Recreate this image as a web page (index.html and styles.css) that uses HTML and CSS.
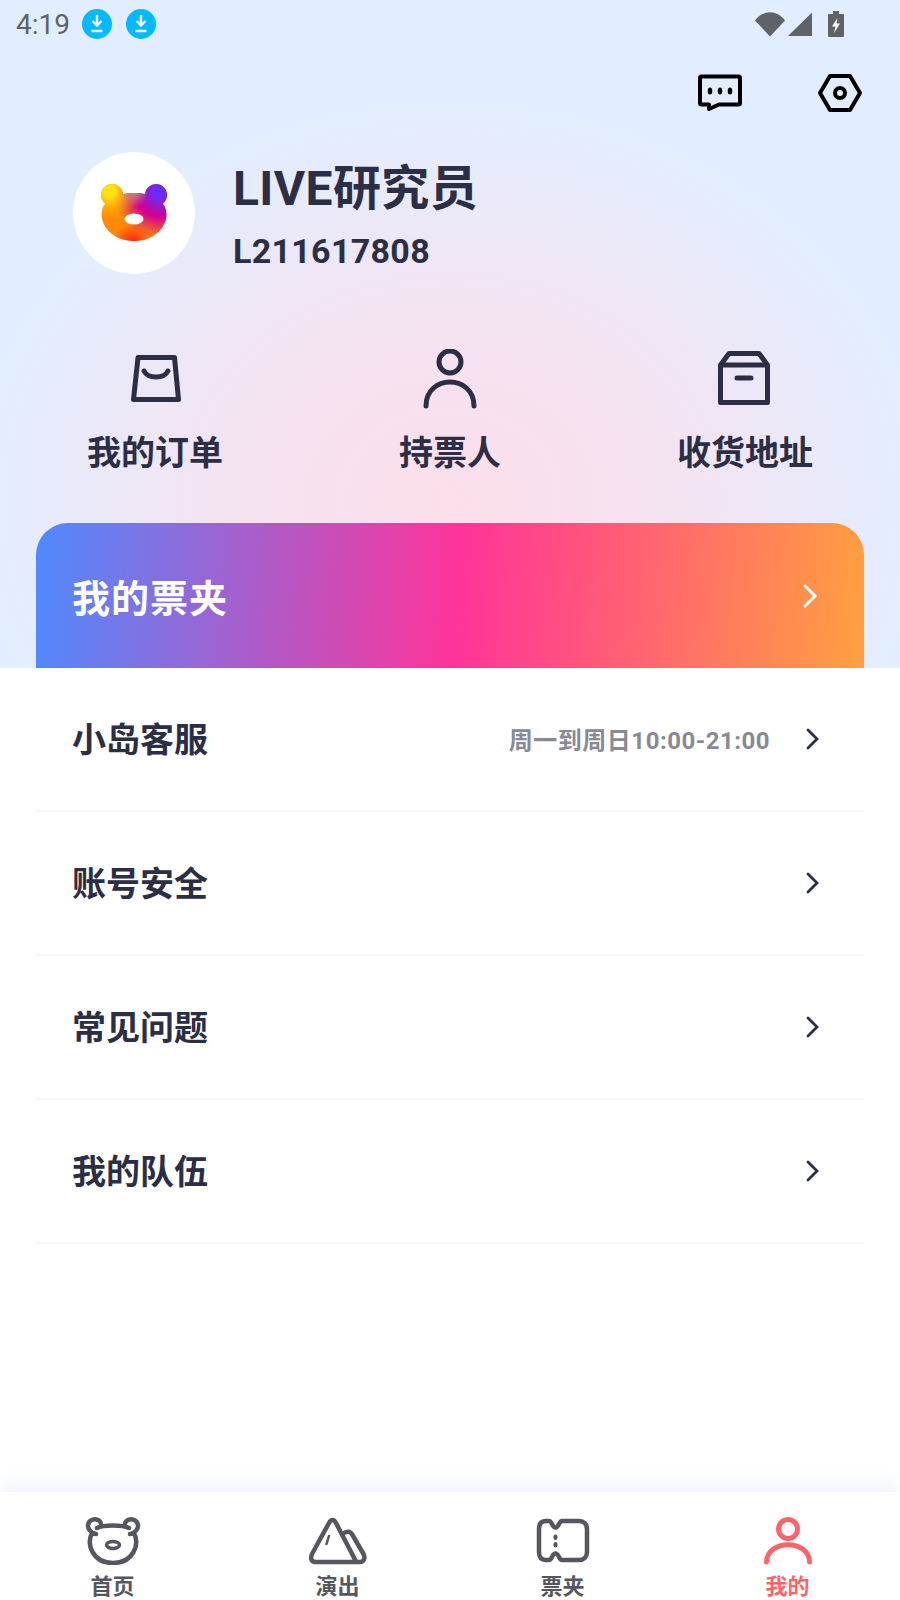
FILE: index.html
```html
<!DOCTYPE html>
<html lang="zh-CN">
<head>
    <meta charset="UTF-8">
    <title>我的</title>
    <link rel="stylesheet" href="styles.css">
</head>
<body>
    <div class="page">
        <div class="hero">
            <div class="status-bar">
                <span class="time">4:19</span>
                <span class="dl-badge">
                    <svg width="16" height="20" viewBox="0 0 16 20"><path d="M8 1v10M3.500 7 8 11.500 12.500 7M2.500 17h11" fill="none" stroke="#fff" stroke-width="2.400"/></svg>
                </span>
                <span class="dl-badge">
                    <svg width="16" height="20" viewBox="0 0 16 20"><path d="M8 1v10M3.500 7 8 11.500 12.500 7M2.500 17h11" fill="none" stroke="#fff" stroke-width="2.400"/></svg>
                </span>
                <span class="status-icons">
                    <svg width="30" height="26" viewBox="0 0 30 26"><path d="M0 9.500C8-1.500 22-1.500 30 9.500L15 25.500Z" fill="#5f6368"/></svg>
                    <svg width="26" height="26" viewBox="0 0 26 26"><path d="M25 1.500V25H1Z" fill="#5f6368"/></svg>
                    <svg class="battery" width="16" height="26" viewBox="0 0 16 26"><path d="M5 0h6v3h4a1 1 0 0 1 1 1v21a1 1 0 0 1-1 1H1a1 1 0 0 1-1-1V4a1 1 0 0 1 1-1h4Z" fill="#5f6368"/><path d="M9.500 7 4 15.500h3.500L6 22l6-9.500H8.500Z" fill="#fff"/></svg>
                </span>
            </div>

            <div class="top-actions">
                <svg width="44" height="38" viewBox="0 0 44 38"><path d="M3.500 2.500h37a1.500 1.500 0 0 1 1.500 1.500v25a1.500 1.500 0 0 1-1.500 1.500H21l-10 4.500v-4.500H3.500A1.500 1.500 0 0 1 2 29V4a1.500 1.500 0 0 1 1.500-1.500Z" fill="none" stroke="#000" stroke-width="4" stroke-linejoin="round"/><ellipse cx="12" cy="17" rx="2.300" ry="3.500"/><ellipse cx="22" cy="17" rx="2.300" ry="3.500"/><ellipse cx="32" cy="17" rx="2.300" ry="3.500"/></svg>
                <svg width="44" height="38" viewBox="0 0 44 38"><path d="M12 2h20l10 17-10 17H12L2 19Z" fill="none" stroke="#000" stroke-width="4" stroke-linejoin="round"/><circle cx="22" cy="19" r="5" fill="none" stroke="#000" stroke-width="4"/></svg>
            </div>

            <div class="profile">
                <div class="avatar">
                    <svg width="70" height="60" viewBox="0 0 70 60">
                        <defs>
                            <radialGradient id="bearYellow" gradientUnits="userSpaceOnUse" cx="10" cy="8" r="30">
                                <stop offset="0.2" stop-color="#ffe010"/>
                                <stop offset="1" stop-color="#ffa000" stop-opacity="0"/>
                            </radialGradient>
                            <radialGradient id="bearPurple" gradientUnits="userSpaceOnUse" cx="62" cy="8" r="48">
                                <stop offset="0.15" stop-color="#6c2bf5"/>
                                <stop offset="0.55" stop-color="#d4008f"/>
                                <stop offset="1" stop-color="#d4008f" stop-opacity="0"/>
                            </radialGradient>
                            <radialGradient id="bearRed" gradientUnits="userSpaceOnUse" cx="34" cy="60" r="20">
                                <stop offset="0.2" stop-color="#ff3015"/>
                                <stop offset="1" stop-color="#ff3015" stop-opacity="0"/>
                            </radialGradient>
                            <radialGradient id="bearTop" gradientUnits="userSpaceOnUse" cx="35" cy="10" r="14">
                                <stop offset="0" stop-color="#b98a7e"/>
                                <stop offset="1" stop-color="#b98a7e" stop-opacity="0"/>
                            </radialGradient>
                            <clipPath id="bearShape">
                                <circle cx="13" cy="12" r="11"/>
                                <circle cx="57" cy="12" r="11"/>
                                <path d="M35 10C50 10 60 14 66 24C72 40 58 58 35 58C12 58-2 40 4 24C10 14 20 10 35 10Z"/>
                            </clipPath>
                        </defs>
                        <g clip-path="url(#bearShape)">
                            <rect width="70" height="60" fill="#ff8a08"/>
                            <rect width="70" height="60" fill="url(#bearPurple)"/>
                            <rect width="70" height="60" fill="url(#bearYellow)"/>
                            <rect width="70" height="60" fill="url(#bearRed)"/>
                            <rect width="70" height="60" fill="url(#bearTop)"/>
                        </g>
                        <ellipse cx="35" cy="36" rx="9.500" ry="5.500" fill="#fff"/>
                    </svg>
                </div>
                <div class="profile-text">
                    <h1 class="nickname">LIVE研究员</h1>
                    <div class="user-id">L211617808</div>
                </div>
            </div>

            <div class="shortcuts">
                <div class="shortcut">
                    <svg width="60" height="60" viewBox="0 0 60 60"><path d="M13 8.500h36.500l4 42H8.500Z" fill="none" stroke="#2b2e45" stroke-width="5" stroke-linejoin="round"/><path d="M19 22c4 8 20 8 24 0" fill="none" stroke="#2b2e45" stroke-width="5" stroke-linecap="round"/></svg>
                    <span>我的订单</span>
                </div>
                <div class="shortcut">
                    <svg width="60" height="60" viewBox="0 0 60 60"><circle cx="30" cy="13" r="11" fill="none" stroke="#2b2e45" stroke-width="5"/><path d="M6 57C6 25 54 25 54 57" fill="none" stroke="#2b2e45" stroke-width="5" stroke-linecap="round"/></svg>
                    <span>持票人</span>
                </div>
                <div class="shortcut">
                    <svg width="60" height="60" viewBox="0 0 60 60"><path d="M5.500 16 14 4.500h30L52.500 16v37.500H5.500Z" fill="none" stroke="#2b2e45" stroke-width="5" stroke-linejoin="round"/><path d="M5.500 16h47" stroke="#2b2e45" stroke-width="5"/><path d="M22 29h14" stroke="#2b2e45" stroke-width="5" stroke-linecap="round"/></svg>
                    <span>收货地址</span>
                </div>
            </div>

            <div class="wallet-card">
                <span>我的票夹</span>
                <svg width="16" height="24" viewBox="0 0 16 24"><path d="M3 2l10 10L3 22" fill="none" stroke="#fff" stroke-width="3" stroke-linecap="round"/></svg>
            </div>
        </div>

        <div class="menu">
            <div class="menu-row">
                <span class="menu-title">小岛客服</span>
                <span class="menu-note">周一到周日10:00-21:00</span>
                <svg width="16" height="24" viewBox="0 0 16 24"><path d="M4 3l9 9-9 9" fill="none" stroke="#2b2e45" stroke-width="2.800" stroke-linecap="round"/></svg>
            </div>
            <div class="menu-row">
                <span class="menu-title">账号安全</span>
                <svg width="16" height="24" viewBox="0 0 16 24"><path d="M4 3l9 9-9 9" fill="none" stroke="#2b2e45" stroke-width="2.800" stroke-linecap="round"/></svg>
            </div>
            <div class="menu-row">
                <span class="menu-title">常见问题</span>
                <svg width="16" height="24" viewBox="0 0 16 24"><path d="M4 3l9 9-9 9" fill="none" stroke="#2b2e45" stroke-width="2.800" stroke-linecap="round"/></svg>
            </div>
            <div class="menu-row">
                <span class="menu-title">我的队伍</span>
                <svg width="16" height="24" viewBox="0 0 16 24"><path d="M4 3l9 9-9 9" fill="none" stroke="#2b2e45" stroke-width="2.800" stroke-linecap="round"/></svg>
            </div>
        </div>

        <div class="tab-bar">
            <div class="tab">
                <svg width="60" height="48" viewBox="0 0 60 48"><path d="M14 11C21 7.500 39 7.500 46 11M13 17C8 16 4.500 12 5 8C6 2.500 12 1 16 3.500C18 5 18.500 7 18 9M47 17C52 16 55.500 12 55 8C54 2.500 48 1 44 3.500C42 5 41.500 7 42 9M9 16C3 28 10 46 30 46C50 46 57 28 51 16" fill="none" stroke="#55565f" stroke-width="4.500" stroke-linecap="round"/><ellipse cx="30" cy="28" rx="6.500" ry="3.500" fill="none" stroke="#55565f" stroke-width="3.500"/></svg>
                <span>首页</span>
            </div>
            <div class="tab">
                <svg width="60" height="48" viewBox="0 0 60 48"><path d="M21 6 4 37C2 42 3.500 45 8 45H52C56 45 57.500 41 55.500 37L44.500 18C42.500 14 39 14 36 16M28 6 48 44.500M28 6C26 2 23 2 21 6" fill="none" stroke="#55565f" stroke-width="4.500" stroke-linecap="round" stroke-linejoin="round"/><path d="M21 19 18.500 27" stroke="#55565f" stroke-width="2.500" stroke-linecap="round"/></svg>
                <span>演出</span>
            </div>
            <div class="tab">
                <svg width="60" height="48" viewBox="0 0 60 48"><path d="M13 4h3C19 4 19 10.500 22.500 10.500S26 4 29 4H46C51 4 54 7 54 12V35C54 40 51 43 46 43H29C26 43 26 36.500 22.500 36.500S19 43 16 43H13C8 43 6 40 6 35V12C6 7 8 4 13 4Z" fill="none" stroke="#55565f" stroke-width="4.500" stroke-linejoin="round"/><path d="M22.500 19.500v1.500M22.500 27v1.500" stroke="#55565f" stroke-width="4" stroke-linecap="round"/></svg>
                <span>票夹</span>
            </div>
            <div class="tab active">
                <svg width="60" height="48" viewBox="0 0 60 48"><circle cx="30" cy="12" r="9.500" fill="none" stroke="#ff6369" stroke-width="5"/><path d="M8.500 45C9 22 51 22 51.500 45" fill="none" stroke="#ff6369" stroke-width="5" stroke-linecap="round"/></svg>
                <span>我的</span>
            </div>
        </div>
    </div>
</body>
</html>
```
FILE: styles.css
```css
* {
    box-sizing: border-box;
    margin: 0;
    padding: 0;
}

body {
    font-family: 'Roboto', 'Noto Sans CJK SC', sans-serif;
    background-color: #fff;
    color: #2b2e45;
}

.page {
    width: 900px;
    height: 1600px;
    display: flex;
    flex-direction: column;
    overflow: hidden;
}

.hero {
    height: 668px;
    flex-shrink: 0;
    background: radial-gradient(ellipse 480px 400px at 450px 500px, #fddeeb 0, rgba(253,222,235,0.66) 48%, rgba(253,222,235,0) 100%), #e2eeff;
}

.status-bar {
    height: 48px;
    display: flex;
    align-items: center;
    gap: 12px;
    padding: 0 56px 0 16px;
}

.time {
    font-size: 28px;
    color: #5f6368;
}

.dl-badge {
    width: 30px;
    height: 30px;
    border-radius: 50%;
    background: #00b9ff;
    display: flex;
    align-items: center;
    justify-content: center;
    margin-right: 2px;
}

.status-icons {
    margin-left: auto;
    display: flex;
    align-items: center;
    gap: 2px;
}

.status-icons .battery {
    margin-left: 13px;
}

.top-actions {
    display: flex;
    justify-content: flex-end;
    gap: 76px;
    padding: 26px 38px 0 0;
}

.profile {
    display: flex;
    align-items: center;
    gap: 38px;
    padding: 0 0 0 73px;
    margin-top: 40px;
}

.avatar {
    width: 122px;
    height: 122px;
    border-radius: 50%;
    background: #fff;
    display: flex;
    align-items: center;
    justify-content: center;
}

.profile-text {
    padding-top: 6px;
}

.nickname {
    font-size: 48px;
    line-height: 56px;
    font-weight: 700;
    letter-spacing: 0.4px;
}

.user-id {
    font-size: 34px;
    line-height: 40px;
    font-weight: 700;
    margin-top: 14px;
    letter-spacing: 0.3px;
}

.shortcuts {
    display: flex;
    justify-content: space-between;
    padding: 0 36px;
    margin-top: 75px;
}

.shortcut {
    width: 238px;
    display: flex;
    flex-direction: column;
    align-items: center;
    gap: 19px;
    font-size: 34px;
    font-weight: 700;
    line-height: 50px;
}

.wallet-card {
    height: 145px;
    margin: 45px 36px 0;
    padding: 0 46px 0 36px;
    border-radius: 32px 32px 0 0;
    background: linear-gradient(94deg, #4f8aff 0%, #ff3399 51%, #ffa040 100%);
    color: #fff;
    font-size: 38px;
    font-weight: 700;
    letter-spacing: 1px;
    display: flex;
    align-items: center;
    justify-content: space-between;
}

.menu {
    flex: 1;
    padding: 0 36px;
}

.menu-row {
    height: 144px;
    border-bottom: 2px solid #f3f6fc;
    padding: 0 44px 0 36px;
    display: flex;
    align-items: center;
}

.menu-title {
    font-size: 34px;
    font-weight: 700;
    margin-right: auto;
    padding-bottom: 4px;
}

.menu-note {
    font-size: 24px;
    font-weight: 700;
    letter-spacing: 0.5px;
    color: #878995;
    margin-right: 34px;
    padding-bottom: 2px;
}

.tab-bar {
    height: 108px;
    flex-shrink: 0;
    display: grid;
    grid-template-columns: repeat(4, 1fr);
    background: #fff;
    box-shadow: 0 -6px 18px rgba(90,125,220,0.10);
    padding-top: 25px;
}

.tab {
    display: flex;
    flex-direction: column;
    align-items: center;
    font-size: 22px;
    font-weight: 700;
    line-height: 28px;
    color: #55565f;
    gap: 8px;
}

.tab.active {
    color: #ff6369;
}
```
